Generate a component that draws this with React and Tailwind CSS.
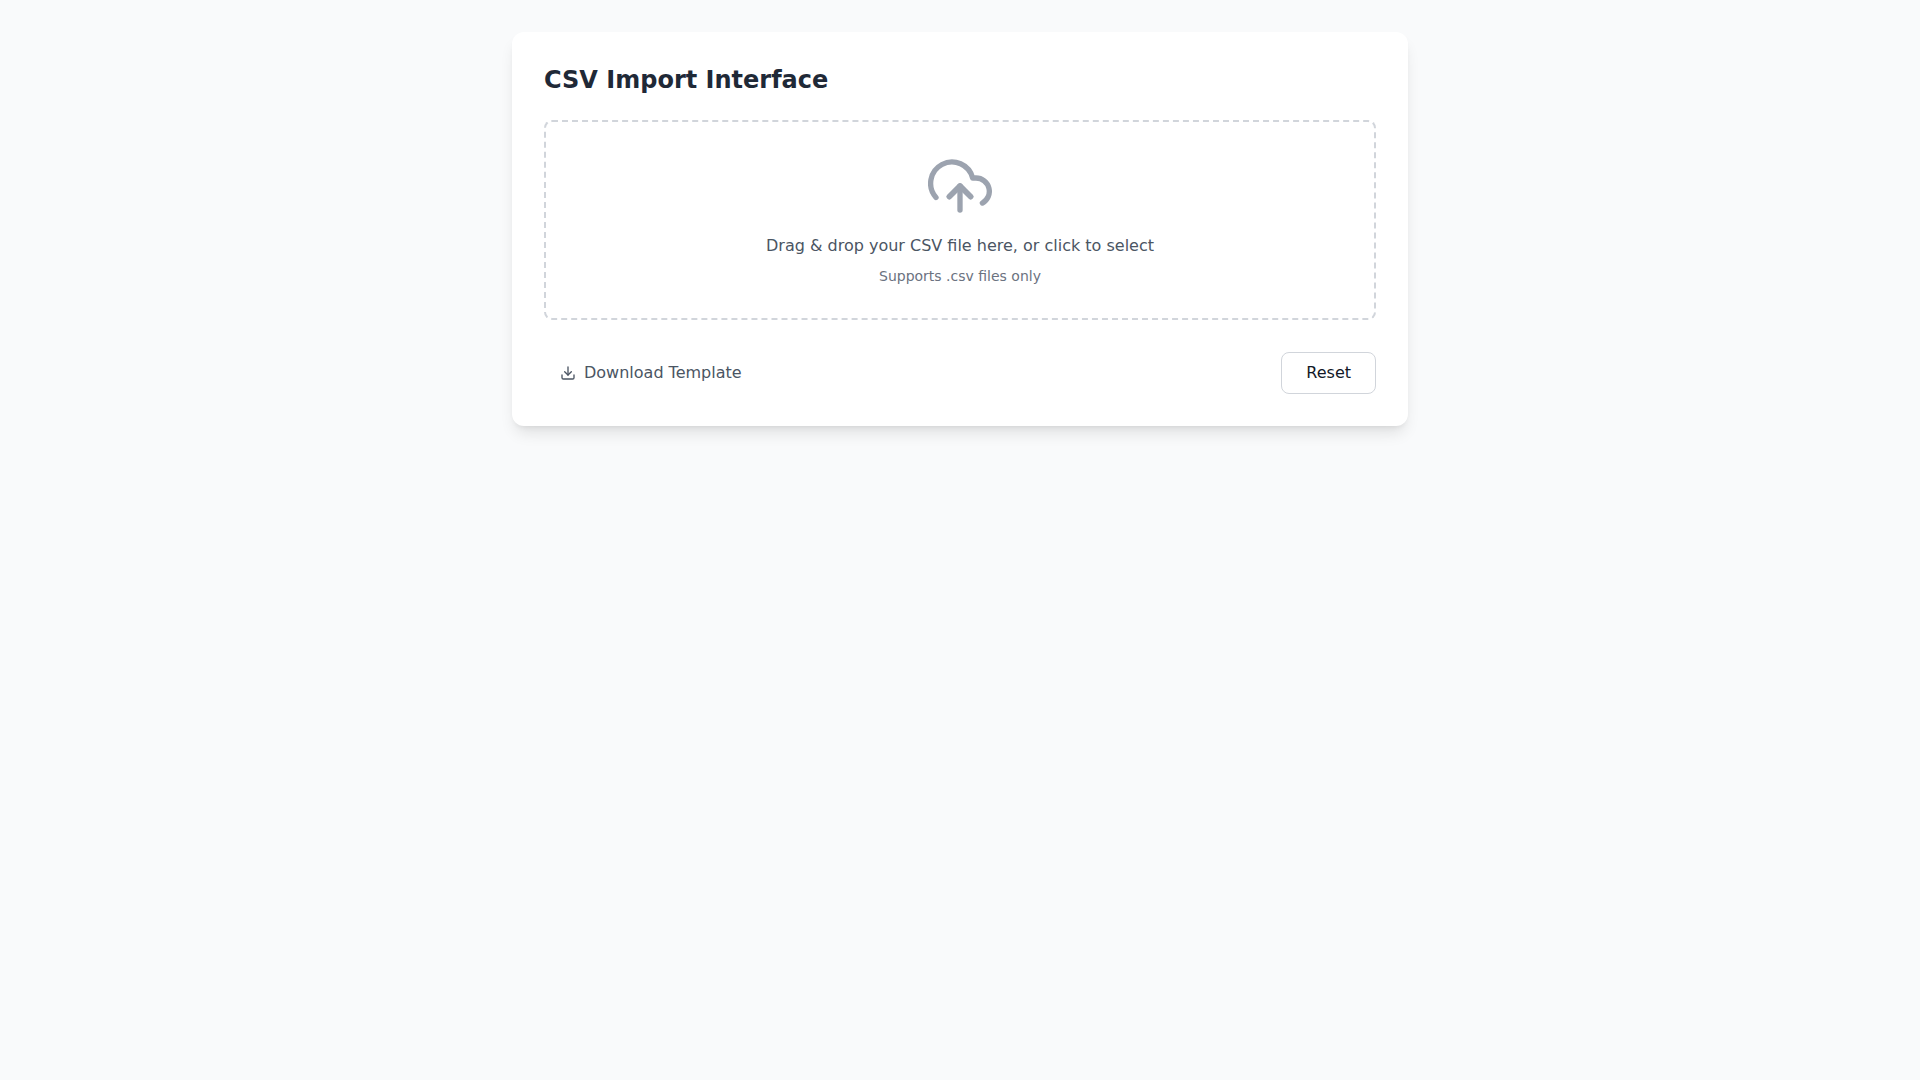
import React, { useRef, useState } from 'react';
import { FiDownload, FiUploadCloud } from 'react-icons/fi';

const TEMPLATE = 'name,email,phone\n';

export default function App() {
  const [file, setFile] = useState(null);
  const inputRef = useRef(null);

  const handleDrop = (e) => {
    e.preventDefault();
    const dropped = e.dataTransfer.files[0];
    if (dropped && dropped.name.endsWith('.csv')) {
      setFile(dropped);
    }
  };

  const handleReset = () => {
    setFile(null);
    inputRef.current.value = '';
  };

  return (
    <div className="min-h-screen bg-[#f9fafb] p-8 font-['DejaVu_Sans',sans-serif] text-[#111827]">
      <div className="max-w-4xl mx-auto bg-white rounded-xl shadow-lg p-8">
        <h1 className="text-2xl font-bold text-[#1f2937] mb-6">CSV Import Interface</h1>

        <label
          htmlFor="csv-file"
          onDragOver={(e) => e.preventDefault()}
          onDrop={handleDrop}
          className="block border-2 border-dashed border-[#d1d5db] rounded-lg p-8 text-center cursor-pointer"
        >
          <input
            id="csv-file"
            ref={inputRef}
            type="file"
            accept=".csv"
            className="hidden"
            onChange={(e) => setFile(e.target.files[0] || null)}
          />
          <FiUploadCloud className="w-16 h-16 mx-auto mb-4 text-[#9ca3af]" />
          <p className="text-[#4b5563] mb-2">
            {file ? file.name : 'Drag & drop your CSV file here, or click to select'}
          </p>
          <p className="text-sm text-[#6b7280]">Supports .csv files only</p>
        </label>

        <div className="mt-8 flex justify-between items-center">
          <a
            href={`data:text/csv,${encodeURIComponent(TEMPLATE)}`}
            download="template.csv"
            className="flex items-center gap-2 px-4 py-2 text-[#4b5563]"
          >
            <FiDownload className="w-4 h-4" />
            Download Template
          </a>
          <button
            type="button"
            onClick={handleReset}
            className="px-6 py-2 border border-[#d1d5db] rounded-lg"
          >
            Reset
          </button>
        </div>
      </div>
    </div>
  );
}
